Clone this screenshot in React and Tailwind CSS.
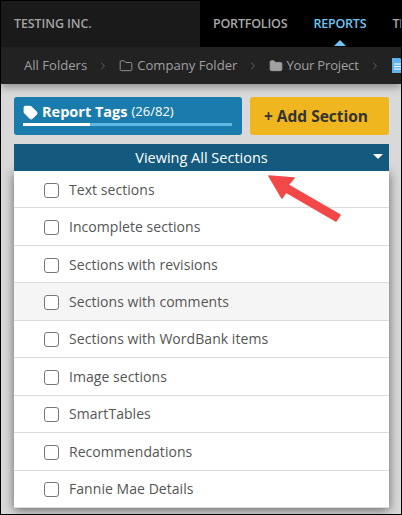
import React from "react";
import { Tag, Folder, ChevronRight } from "lucide-react";

const sections = [
    "Text sections",
    "Incomplete sections",
    "Sections with revisions",
    "Sections with comments",
    "Sections with WordBank items",
    "Image sections",
    "SmartTables",
    "Recommendations",
    "Fannie Mae Details",
];

const crumbSep = <ChevronRight className="w-[12px] h-[12px] text-[#777] mx-[10px] shrink-0" strokeWidth={1.5} />;

export default function App() {
    return (
        <div className="relative w-[402px] h-[515px] overflow-hidden bg-[#d9d9d9] border border-black font-['Open_Sans',sans-serif]">
            <div className="flex h-[46px] bg-black">
                <div className="w-[199px] bg-[#1a1a1a] flex items-center pl-[13px] text-[12.5px] tracking-[-0.1px] font-semibold text-[#a3a3a3] shrink-0">TESTING INC.</div>
                <div className="flex items-center pl-[13px] gap-[26px] text-[12.5px] tracking-[-0.2px] font-semibold whitespace-nowrap">
                    <span className="text-[#a8a8a8]">PORTFOLIOS</span>
                    <span className="relative text-[#6cc5f2]">
                        REPORTS
                        <span className="absolute left-1/2 -translate-x-1/2 top-[25px] border-x-[6px] border-x-transparent border-b-[6px] border-b-[#6cc5f2]" />
                    </span>
                    <span className="text-[#a8a8a8]">TEMPLATES</span>
                </div>
            </div>
            <div className="flex items-center h-[37px] bg-[#222222] pl-[23px] text-[13.1px] text-[#a0a0a0] whitespace-nowrap shadow-[0_3px_8px_rgba(0,0,0,0.35)]">
                <span>All Folders</span>
                {crumbSep}
                <Folder className="w-[14px] h-[14px] mr-[4px] shrink-0" strokeWidth={1.5} />
                <span>Company Folder</span>
                {crumbSep}
                <Folder className="w-[14px] h-[14px] mr-[3px] shrink-0 fill-[#a0a0a0]" strokeWidth={1.5} />
                <span className="tracking-[-0.2px]">Your Project</span>
                <ChevronRight className="w-[12px] h-[12px] text-[#777] ml-[10px] mr-[11px] shrink-0" strokeWidth={1.5} />
                <svg className="w-[12px] h-[15px] shrink-0" viewBox="0 0 12 15">
                    <path d="M0 0h8l4 4v11H0z" fill="#5db4ee" />
                    <path d="M2 6h8M2 8.5h8M2 11h8" stroke="#fff" strokeWidth="1" />
                </svg>
            </div>
            <div className="pl-[13px] pr-[12px] pt-[13px]">
                <div className="flex gap-[8px] h-[38px]">
                    <div className="w-[228px] bg-[#1a7cac] rounded-[3px] pl-[9px] pt-[5px] text-white">
                        <div className="flex items-center gap-[4px] h-[20px] whitespace-nowrap">
                            <Tag className="w-[15px] h-[15px] fill-white text-white" />
                            <span className="text-[14.5px] font-bold">Report Tags</span>
                            <span className="text-[13px]">(26/82)</span>
                        </div>
                        <div className="mt-[1px] h-[3px] w-[209px] bg-[#5db8e3]">
                            <div className="h-full w-[67px] bg-white" />
                        </div>
                    </div>
                    <div className="w-[139px] bg-[#efb61f] rounded-[3px] flex items-center justify-center pr-[7px] pt-[2px] text-[15.5px] font-bold text-[#333]">
                        + Add Section
                    </div>
                </div>
                <div className="relative mt-[9px] h-[27px] w-[375px] bg-[#135a7e] text-white text-[14.5px] flex items-center justify-center">
                    Viewing All Sections
                    <span className="absolute right-[6px] top-[10px] border-x-[5px] border-x-transparent border-t-[5px] border-t-white" />
                </div>
                <div className="w-[375px] bg-white shadow-[0_2px_10px_rgba(0,0,0,0.55)]">
                    {sections.map((s) => (
                        <div key={s} className={`flex items-center h-[37.44px] pl-[30px] gap-[10px] text-[14px] tracking-[0.05px] text-[#555] border-b border-[#dcdcdc] ${s === "Sections with comments" ? "bg-[#f5f5f5]" : ""}`}>
                            <span className="w-[15px] h-[15px] mt-[2px] rounded-[3px] border-[1.5px] border-[#777] bg-white shrink-0" />
                            <span>{s}</span>
                        </div>
                    ))}
                </div>
            </div>
            <svg className="absolute left-[267px] top-[174px] w-[76px] h-[50px]" viewBox="0 0 76 50">
                <path d="M1 1 L26 3 L20 10 L72 40 L68 46 L18 17 L14 23 Z" fill="#f44848" stroke="#f44848" strokeWidth="1.5" strokeLinejoin="round" />
            </svg>
        </div>
    );
}
